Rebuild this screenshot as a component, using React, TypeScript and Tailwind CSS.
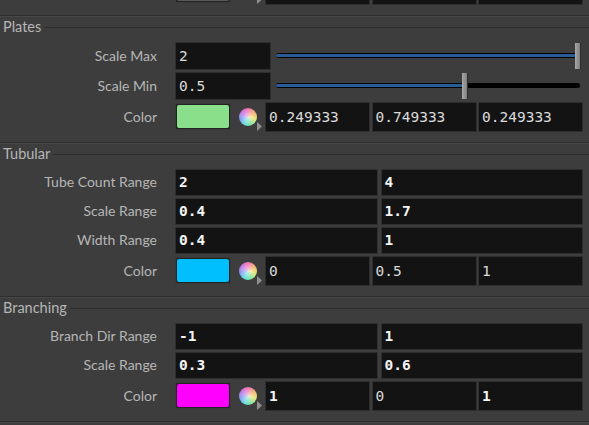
const Field = ({ v, bold, h, className = "" }: { v?: string; bold?: boolean; h: string; className?: string }) => (
  <div className={`${h} bg-[#131313] border border-[#2e2e2e] pl-[3px] flex items-center text-[14.5px] leading-none ${bold ? "font-bold text-[#f4f4f4]" : "text-[#dcdcdc]"} ${className}`} style={{ fontFamily: '"DejaVu Sans Mono", monospace' }}>
    {v}
  </div>
);

const Label = ({ t, className = "" }: { t: string; className?: string }) => (
  <div className={`w-[157px] shrink-0 text-right text-[14px] leading-none text-[#b6b6b6] mr-[18px] ${className}`}>{t}</div>
);

const Wheel = () => (
  <div className="relative w-[34px] h-[30px] shrink-0">
    <div className="absolute left-[8px] top-[6px] w-[18px] h-[18px] rounded-full bg-[conic-gradient(#f060a8,#f0a060,#e8e060,#70e090,#50d8d8,#7090f0,#c060e0,#f060a8)]" />
    <div className="absolute left-[8px] top-[6px] w-[18px] h-[18px] rounded-full bg-[radial-gradient(circle,#ffffffb0_0%,#ffffff40_50%,#ffffff00_80%)]" />
    <svg className="absolute left-[26px] top-[20px]" width="5" height="9"><path d="M0 0 L5 4.5 L0 9 Z" fill="#909090" /></svg>
  </div>
);

const Swatch = ({ c }: { c: string }) => (
  <div className="w-[56px] h-[27px] shrink-0 self-start mt-[1px] border border-[#3a3a3a] bg-[#232323] p-[1px] rounded-[2px]">
    <div className="w-full h-full rounded-[2px]" style={{ background: c }} />
  </div>
);

const ColorRow = ({ c, vals, bold, label = "Color" }: { c: string; vals: string[]; bold?: boolean[]; label?: string }) => (
  <div className="flex items-center h-[30px] pr-[6px]">
    <Label t={label} />
    <Swatch c={c} />
    <Wheel />
    <div className="flex flex-1 gap-[1.5px]">
      <Field h="h-[30px]" v={vals[0]} bold={bold?.[0]} className="flex-1" />
      <Field h="h-[30px]" v={vals[1]} bold={bold?.[1]} className="flex-1" />
      <Field h="h-[30px]" v={vals[2]} bold={bold?.[2]} className="flex-1" />
    </div>
  </div>
);

const TwoRow = ({ t, a, b }: { t: string; a: string; b: string }) => (
  <div className="flex items-center h-[27px] pr-[6px]">
    <Label t={t} className="pb-[1px]" />
    <div className="flex flex-1 gap-[3px]">
      <Field h="h-[27px]" v={a} bold className="flex-1" />
      <Field h="h-[27px]" v={b} bold className="flex-1" />
    </div>
  </div>
);

const Slider = ({ t, v, pct }: { t: string; v: string; pct: number }) => (
  <div className="flex items-center h-[28px]">
    <Label t={t} />
    <Field h="h-[28px]" v={v} className="w-[96px] shrink-0" />
    <div className="relative flex-1 h-[26px] ml-[5px] mr-[9px]">
      <div className="absolute left-0 right-0 top-[10px] h-[5px] bg-black rounded-full" />
      <div className="absolute left-0 top-[11px] h-[3px] bg-[#2a5d96] rounded-l-full" style={{ width: `${pct}%` }} />
      <div className="absolute top-0 h-[26px] w-[6px] -ml-[3px] bg-gradient-to-r from-[#a8a8a8] to-[#808080] border-r border-[#2c2c2c]" style={{ left: `${pct}%` }} />
    </div>
  </div>
);

const Section = ({ t, children }: { t: string; children: React.ReactNode }) => (
  <section>
    <div className="h-[2px] bg-[#2e2e2e] border-b border-[#474747]" />
    <div className="flex items-center h-[21px] pl-[3px] gap-[3px] mb-[4px]">
      <span className="text-[14.5px] leading-none text-[#b6b6b6]">{t}</span>
      <div className="flex-1 h-px bg-[#2b2b2b]" />
    </div>
    <div className="flex flex-col gap-[2px]">{children}</div>
    <div className="h-[10px]" />
  </section>
);

export default function App() {
  return (
    <div className="w-[589px] h-[425px] overflow-hidden bg-[#3d3d3d]" style={{ fontFamily: "Lato, sans-serif" }}>
      <div className="-mt-[25px] mb-[10px]">
        <ColorRow label="" c="#5a5a5a" vals={["", "", ""]} />
      </div>
      <Section t="Plates">
        <Slider t="Scale Max" v="2" pct={99.5} />
        <Slider t="Scale Min" v="0.5" pct={62.3} />
        <ColorRow c="#8ae08a" vals={["0.249333", "0.749333", "0.249333"]} />
      </Section>
      <Section t="Tubular">
        <TwoRow t="Tube Count Range" a="2" b="4" />
        <TwoRow t="Scale Range" a="0.4" b="1.7" />
        <TwoRow t="Width Range" a="0.4" b="1" />
        <ColorRow c="#00bfff" vals={["0", "0.5", "1"]} />
      </Section>
      <Section t="Branching">
        <TwoRow t="Branch Dir Range" a="-1" b="1" />
        <TwoRow t="Scale Range" a="0.3" b="0.6" />
        <ColorRow c="#ff00ff" vals={["1", "0", "1"]} bold={[true, false, true]} />
      </Section>
      <div className="h-[2px] bg-[#2e2e2e] border-b border-[#474747]" />
    </div>
  );
}
